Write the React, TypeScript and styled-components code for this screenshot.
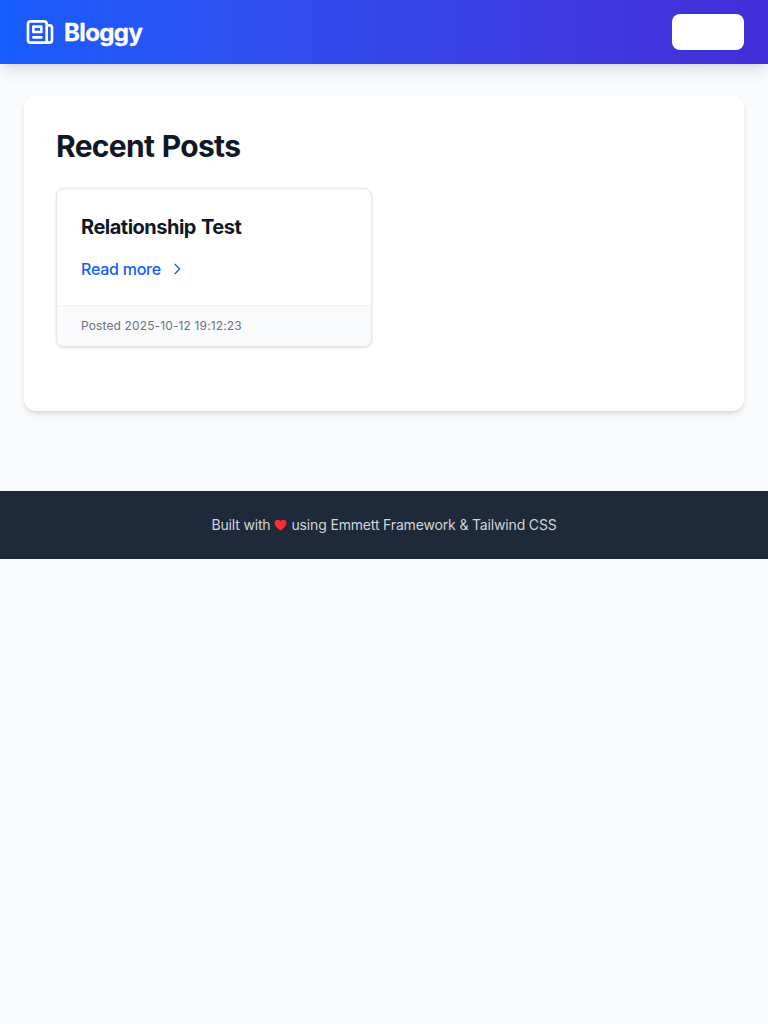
import React from "react";
import styled, { createGlobalStyle } from "styled-components";

const GlobalStyle = createGlobalStyle`
  *, *::before, *::after { box-sizing: border-box; }
  body {
    margin: 0;
    background: #f9fafb;
    color: #101828;
    font-family: Inter, "Liberation Sans", sans-serif;
    font-size: 16px;
    line-height: 24px;
    -webkit-font-smoothing: antialiased;
  }
  h1, h2, p { margin: 0; }
`;

const Header = styled.header`
  display: flex;
  align-items: center;
  justify-content: space-between;
  height: 64px;
  padding: 0 24px;
  background: linear-gradient(to right in oklab, #155dfc, #432dd7);
  box-shadow: 0 10px 15px -3px rgba(0, 0, 0, 0.1), 0 4px 6px -4px rgba(0, 0, 0, 0.1);
`;

const Brand = styled.a`
  display: flex;
  align-items: center;
  gap: 8px;
  color: #fff;
  font-size: 24px;
  line-height: 32px;
  font-weight: 700;
  letter-spacing: -0.6px;
`;

const BrandName = styled.span`
  padding-top: 2px;
  -webkit-text-stroke: 0.3px currentColor;
`;

const HeaderButton = styled.button`
  width: 72px;
  height: 36px;
  border: 0;
  border-radius: 8px;
  background: #fff;
`;

const Main = styled.main`
  padding: 32px 24px;
`;

const Panel = styled.section`
  padding: 32px;
  border-radius: 12px;
  background: #fff;
  box-shadow: 0 4px 6px -1px rgba(0, 0, 0, 0.1), 0 2px 4px -2px rgba(0, 0, 0, 0.1);
`;

const PageTitle = styled.h1`
  margin-bottom: 24px;
  font-size: 30px;
  line-height: 36px;
  font-weight: 700;
  letter-spacing: -0.7px;
  word-spacing: 1.2px;
`;

const PostGrid = styled.div`
  display: grid;
  grid-template-columns: repeat(2, 1fr);
  gap: 24px;
  margin-bottom: 32px;
`;

const PostCard = styled.article`
  overflow: hidden;
  border: 1px solid #e5e7eb;
  border-radius: 8px;
  background: #fff;
  box-shadow: 0 1px 3px rgba(0, 0, 0, 0.1), 0 1px 2px -1px rgba(0, 0, 0, 0.1);
`;

const PostBody = styled.div`
  padding: 24px;
`;

const PostTitle = styled.h2`
  margin-bottom: 16px;
  font-size: 20px;
  line-height: 28px;
  font-weight: 700;
  letter-spacing: -0.5px;
  word-spacing: 0.8px;
`;

const ReadMore = styled.a`
  display: flex;
  align-items: center;
  gap: 8px;
  color: #155dfc;
  font-weight: 500;
  letter-spacing: -0.25px;
`;

const PostMeta = styled.div`
  padding: 12px 24px;
  border-top: 1px solid #f3f4f6;
  background: #f9fafb;
  color: #6a7282;
  font-size: 12px;
  line-height: 16px;
  letter-spacing: 0.13px;
`;

const Footer = styled.footer`
  display: flex;
  align-items: center;
  justify-content: center;
  gap: 4px;
  margin-top: 48px;
  padding: 24px;
  background: #1e2939;
  color: #d1d5dc;
  font-size: 14px;
  line-height: 20px;
  letter-spacing: -0.16px;
`;

const NewsIcon = () => (
  <svg width="32" height="32" viewBox="0 0 24 24" fill="none" stroke="currentColor" strokeWidth="2" strokeLinecap="round" strokeLinejoin="round">
    <path d="M19 20H5a2 2 0 01-2-2V6a2 2 0 012-2h10a2 2 0 012 2v1m2 13a2 2 0 01-2-2V7m2 13a2 2 0 002-2V9a2 2 0 00-2-2h-2m-4-3H9M7 16h6M7 8h6v4H7V8z" />
  </svg>
);

const ChevronIcon = () => (
  <svg width="16" height="16" viewBox="0 0 24 24" fill="none" stroke="currentColor" strokeWidth="2" strokeLinecap="round" strokeLinejoin="round">
    <path d="M9 5l7 7-7 7" />
  </svg>
);

const HeartIcon = () => (
  <svg width="13" height="12" viewBox="0 0 13 12" fill="#fb2c36">
    <path d="M6.5 11.4C3.200 9.300.5 7 .5 4.100.5 2.200 1.900.7 3.700.7c1.200 0 2.200.6 2.800 1.600C7.100 1.300 8.100.7 9.300.7c1.800 0 3.200 1.500 3.200 3.400 0 2.900-2.700 5.200-6 7.300z" />
  </svg>
);

export default function App() {
  return (
    <>
      <GlobalStyle />
      <Header>
        <Brand>
          <NewsIcon />
          <BrandName>Bloggy</BrandName>
        </Brand>
        <HeaderButton aria-label="Account" />
      </Header>
      <Main>
        <Panel>
          <PageTitle>Recent Posts</PageTitle>
          <PostGrid>
            <PostCard>
              <PostBody>
                <PostTitle>Relationship Test</PostTitle>
                <ReadMore>
                  <span>Read more</span>
                  <ChevronIcon />
                </ReadMore>
              </PostBody>
              <PostMeta>Posted 2025-10-12 19:12:23</PostMeta>
            </PostCard>
          </PostGrid>
        </Panel>
      </Main>
      <Footer>
        <span>Built with</span>
        <HeartIcon />
        <span>using Emmett Framework &amp; Tailwind CSS</span>
      </Footer>
    </>
  );
}
